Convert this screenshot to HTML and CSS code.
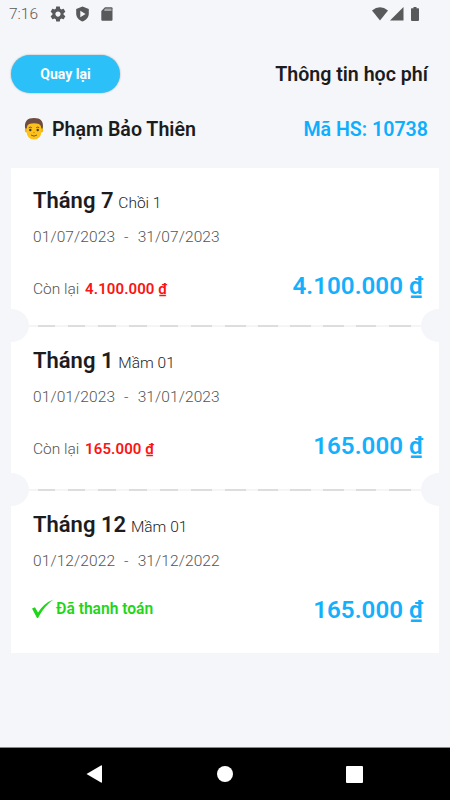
FILE: index.html
```html
<!DOCTYPE html>
<html lang="vi">
<head>
    <meta charset="UTF-8">
    <meta name="viewport" content="width=device-width, initial-scale=1.0">
    <title>Thông tin học phí</title>
    <link rel="stylesheet" href="styles.css">
</head>
<body>
    <div class="status-bar">
        <span class="clock">7:16</span>
        <div class="status-left">
            <svg width="18" height="18" viewBox="0 0 24 24"><path d="M19.43 12.98c.04-.32.07-.64.07-.98s-.03-.66-.07-.98l2.11-1.65c.19-.15.24-.42.12-.64l-2-3.46c-.12-.22-.39-.3-.61-.22l-2.49 1c-.52-.4-1.08-.73-1.69-.98l-.38-2.65C14.46 2.18 14.25 2 14 2h-4c-.25 0-.46.18-.49.42l-.38 2.65c-.61.25-1.17.59-1.69.98l-2.49-1c-.23-.09-.49 0-.61.22l-2 3.46c-.13.22-.07.49.12.64l2.11 1.65c-.04.32-.07.65-.07.98s.03.66.07.98l-2.11 1.65c-.19.15-.24.42-.12.64l2 3.46c.12.22.39.3.61.22l2.49-1c.52.4 1.08.73 1.69.98l.38 2.65c.03.24.24.42.49.42h4c.25 0 .46-.18.49-.42l.38-2.65c.61-.25 1.17-.59 1.69-.98l2.49 1c.23.09.49 0 .61-.22l2-3.46c.12-.22.07-.49-.12-.64l-2.11-1.65zM12 15.5c-1.93 0-3.5-1.57-3.5-3.5s1.57-3.5 3.5-3.5 3.5 1.57 3.5 3.5-1.57 3.5-3.5 3.5z"/></svg>
            <svg width="15" height="16" viewBox="0 0 15 16"><path fill-rule="evenodd" d="M7.500 0.500 L13.800 2.900 V7.500 C13.800 11.500 11 14.200 7.500 15.500 C4 14.200 1.200 11.500 1.200 7.500 V2.900 Z M5.300 4.800 V11.200 L10.600 8 Z"/></svg>
            <svg width="12" height="14" viewBox="0 0 12 14"><path d="M4 0.300 H10.500 Q11.500 0.300 11.500 1.300 V12.700 Q11.500 13.700 10.500 13.700 H1.300 Q0.300 13.700 0.300 12.700 V4 Z"/><path class="cut" d="M4.300 1.500 H10.500 V4 H3.300 V2.500 Z"/></svg>
        </div>
        <div class="status-right">
            <svg width="16" height="14" viewBox="0 0 16 14"><path d="M0 3.500 Q8 -3 16 3.500 L8 13.500 Z"/></svg>
            <svg width="14" height="14" viewBox="0 0 14 14"><path d="M13.500 0 V13.500 H0 Z"/></svg>
            <svg width="8" height="14" viewBox="0 0 8 14"><path d="M2.500 0 H5.500 V1.200 H7.500 Q8 1.200 8 2 V13 Q8 14 7 14 H1 Q0 14 0 13 V2 Q0 1.200 0.500 1.200 H2.500 Z"/></svg>
        </div>
    </div>

    <div class="header">
        <button class="btn-back">Quay lại</button>
        <h1>Thông tin học phí</h1>
    </div>

    <div class="student">
        <svg class="avatar" width="20" height="24" viewBox="0 0 20 24">
            <ellipse cx="2.500" cy="13" rx="1.700" ry="2.500" fill="#f3b000"/>
            <ellipse cx="17.500" cy="13" rx="1.700" ry="2.500" fill="#f3b000"/>
            <path d="M2.500 8 Q3 4 10 4 Q17 4 17.500 8 V14 Q17 22.500 10 22.500 Q3 22.500 2.500 14 Z" fill="#fcc21b"/>
            <path d="M1.200 11.500 C0 4 3.500 1 10 1 C16.500 1 20 4 18.800 11.500 L17.300 11.500 Q17.300 8 15 7 Q10 5.500 5 7 Q2.700 8 2.700 11.500 Z" fill="#6d4c41"/>
            <path d="M4.800 10.700 Q6.300 9.500 7.800 10.700 M12.200 10.700 Q13.700 9.500 15.200 10.700" stroke="#6d4c41" stroke-width="1" fill="none"/>
            <circle cx="6.300" cy="13" r="1.200" fill="#40352f"/>
            <circle cx="13.700" cy="13" r="1.200" fill="#40352f"/>
            <path d="M9 15.500 Q10 16.200 11 15.500" stroke="#d99a00" stroke-width="1" fill="none"/>
            <path d="M7 18 Q10 20.300 13 18" stroke="#795548" stroke-width="1" fill="none"/>
        </svg>
        <span class="name">Phạm Bảo Thiên</span>
        <span class="code">Mã HS: 10738</span>
    </div>

    <div class="tickets">
        <div class="ticket">
            <div class="title"><b>Tháng 7</b> <span>Chồi 1</span></div>
            <div class="dates"><span>01/07/2023</span><span>-</span><span>31/07/2023</span></div>
            <div class="summary">
                <div class="remain">Còn lại <b>4.100.000 ₫</b></div>
                <div class="amount">4.100.000 ₫</div>
            </div>
        </div>
        <div class="divider">
            <svg width="428" height="33" viewBox="0 0 428 33">
                <path class="rail" d="M18 17 H410"/>
                <path class="dash" d="M27 17 H44 M57 17 H74 M87 17 H105 M118 17 H136 M149 17 H167 M180 17 H201 M214 17 H235 M247 17 H267 M279 17 H300 M312 17 H333 M345 17 H365 M378 17 H400"/>
                <ellipse class="notch" cx="0" cy="16.500" rx="18" ry="16.500"/>
                <ellipse class="notch" cx="428" cy="16.500" rx="18" ry="16.500"/>
            </svg>
        </div>
        <div class="ticket">
            <div class="title"><b>Tháng 1</b> <span>Mầm 01</span></div>
            <div class="dates"><span>01/01/2023</span><span>-</span><span>31/01/2023</span></div>
            <div class="summary">
                <div class="remain">Còn lại <b>165.000 ₫</b></div>
                <div class="amount">165.000 ₫</div>
            </div>
        </div>
        <div class="divider wide">
            <svg width="428" height="33" viewBox="0 0 428 33">
                <path class="rail" d="M18 17 H410"/>
                <path class="dash" d="M27 17 H44 M57 17 H74 M87 17 H105 M118 17 H136 M149 17 H167 M180 17 H201 M214 17 H235 M247 17 H267 M279 17 H300 M312 17 H333 M345 17 H365 M378 17 H400"/>
                <ellipse class="notch" cx="0" cy="16.500" rx="18" ry="16.500"/>
                <ellipse class="notch" cx="428" cy="16.500" rx="18" ry="16.500"/>
            </svg>
        </div>
        <div class="ticket">
            <div class="title"><b>Tháng 12</b> <span>Mầm 01</span></div>
            <div class="dates"><span>01/12/2022</span><span>-</span><span>31/12/2022</span></div>
            <div class="summary">
                <div class="paid">
                    <svg width="22" height="20" viewBox="0 0 22 20"><path d="M0 9.500 L3 8.300 L6 13.500 Q12 4 21.500 0.500 Q12 7 6 19 H5 Z"/></svg>
                    <b>Đã thanh toán</b>
                </div>
                <div class="amount">165.000 ₫</div>
            </div>
        </div>
    </div>

    <div class="nav-bar">
        <svg width="17" height="18" viewBox="0 0 17 18"><path d="M0.500 9 L15 0.500 Q16 0 16 1 V17 Q16 18 15 17.500 Z"/></svg>
        <svg width="16" height="16" viewBox="0 0 16 16"><circle cx="8" cy="8" r="8"/></svg>
        <svg width="17" height="17" viewBox="0 0 17 17"><rect width="17" height="17" rx="1"/></svg>
    </div>
</body>
</html>
```
FILE: styles.css
```css
* {
    box-sizing: border-box;
}
body {
    background: #f5f6f9;
    color: #1c1c1e;
    display: flex;
    flex-direction: column;
    font-family: Roboto, "Noto Sans", sans-serif;
    height: 800px;
    margin: 0;
    width: 450px;
}
svg {
    display: block;
    flex: none;
}

/* Status bar */
.status-bar {
    align-items: center;
    color: #58595b;
    display: flex;
    fill: #58595b;
    height: 27px;
    padding: 0 31px 0 9px;
}
.clock {
    font-size: 15.5px;
    font-weight: 300;
    padding-top: 1px;
    width: 40px;
}
.status-left {
    align-items: center;
    display: flex;
    gap: 8px;
}
.status-left svg:last-child {
    margin-left: 3px;
}
.status-left .cut {
    fill: #a5a6a8;
}
.status-right {
    display: flex;
    gap: 2px;
    margin-left: auto;
}
.status-right svg:last-child {
    margin-left: 5px;
}

/* Header */
.header {
    align-items: center;
    display: flex;
    height: 39px;
    justify-content: space-between;
    margin-top: 27px;
    padding: 0 22px 0 11px;
}
.btn-back {
    background: #2bc0f7;
    border: 0;
    border-radius: 20px;
    box-shadow: 0 0 2px rgba(0, 0, 0, 0.35);
    color: #fff;
    font-family: inherit;
    font-size: 14px;
    font-weight: 700;
    height: 38px;
    padding: 0;
    width: 109px;
}
.header h1 {
    font-size: 19.6px;
    font-weight: 600;
    margin: 0;
    padding-top: 1px;
}
.student {
    align-items: center;
    display: flex;
    font-size: 19.6px;
    font-weight: 600;
    height: 24px;
    margin-top: 24px;
    padding: 0 22px 0 24px;
}
.name {
    margin-left: 8px;
}
.code {
    color: #0eaefe;
    margin-left: auto;
}

/* Tickets */
.tickets {
    background: #fff;
    height: 485px;
    margin: 27px 11px 0;
}
.ticket {
    height: 141px;
    padding: 18px 16px 0 22px;
}
.title {
    font-size: 15.5px;
    line-height: 30px;
    white-space: nowrap;
}
.title b {
    font-size: 22px;
    font-weight: 600;
}
.title span {
    font-weight: 300;
    margin-left: 1px;
}
.dates {
    color: #555;
    display: flex;
    font-size: 15.5px;
    font-weight: 300;
    gap: 9px;
    letter-spacing: 0.1px;
    line-height: 20px;
    margin-top: 9px;
}
.summary {
    align-items: center;
    display: flex;
    height: 36px;
    justify-content: space-between;
    margin-top: 21px;
}
.remain {
    color: #555;
    font-size: 15.5px;
    font-weight: 300;
    padding-top: 6px;
}
.remain b {
    color: #fb1414;
    font-size: 15px;
    font-weight: 600;
    letter-spacing: 0.1px;
    margin-left: 2px;
}
.amount {
    color: #14b0fc;
    font-size: 24.2px;
    font-weight: 600;
}
.paid {
    align-items: center;
    color: #1fd51a;
    display: flex;
    fill: #1fd51a;
    font-size: 15.6px;
    gap: 2px;
    margin: -2px 0 0 -1px;
}
.paid b {
    font-weight: 600;
}
.divider {
    height: 19px;
}
.divider.wide {
    height: 23px;
    padding-top: 4px;
}
.rail {
    stroke: #f5f5f5;
    stroke-width: 2;
}
.dash {
    stroke: #dcdddd;
    stroke-width: 2;
}
.notch {
    fill: #f5f6f9;
}

/* Navigation bar */
.nav-bar {
    align-items: center;
    background: #000;
    border-top: 1px solid #888;
    display: flex;
    fill: #fff;
    height: 53px;
    justify-content: space-between;
    margin-top: auto;
    padding: 0 87px 0 86px;
}
```
